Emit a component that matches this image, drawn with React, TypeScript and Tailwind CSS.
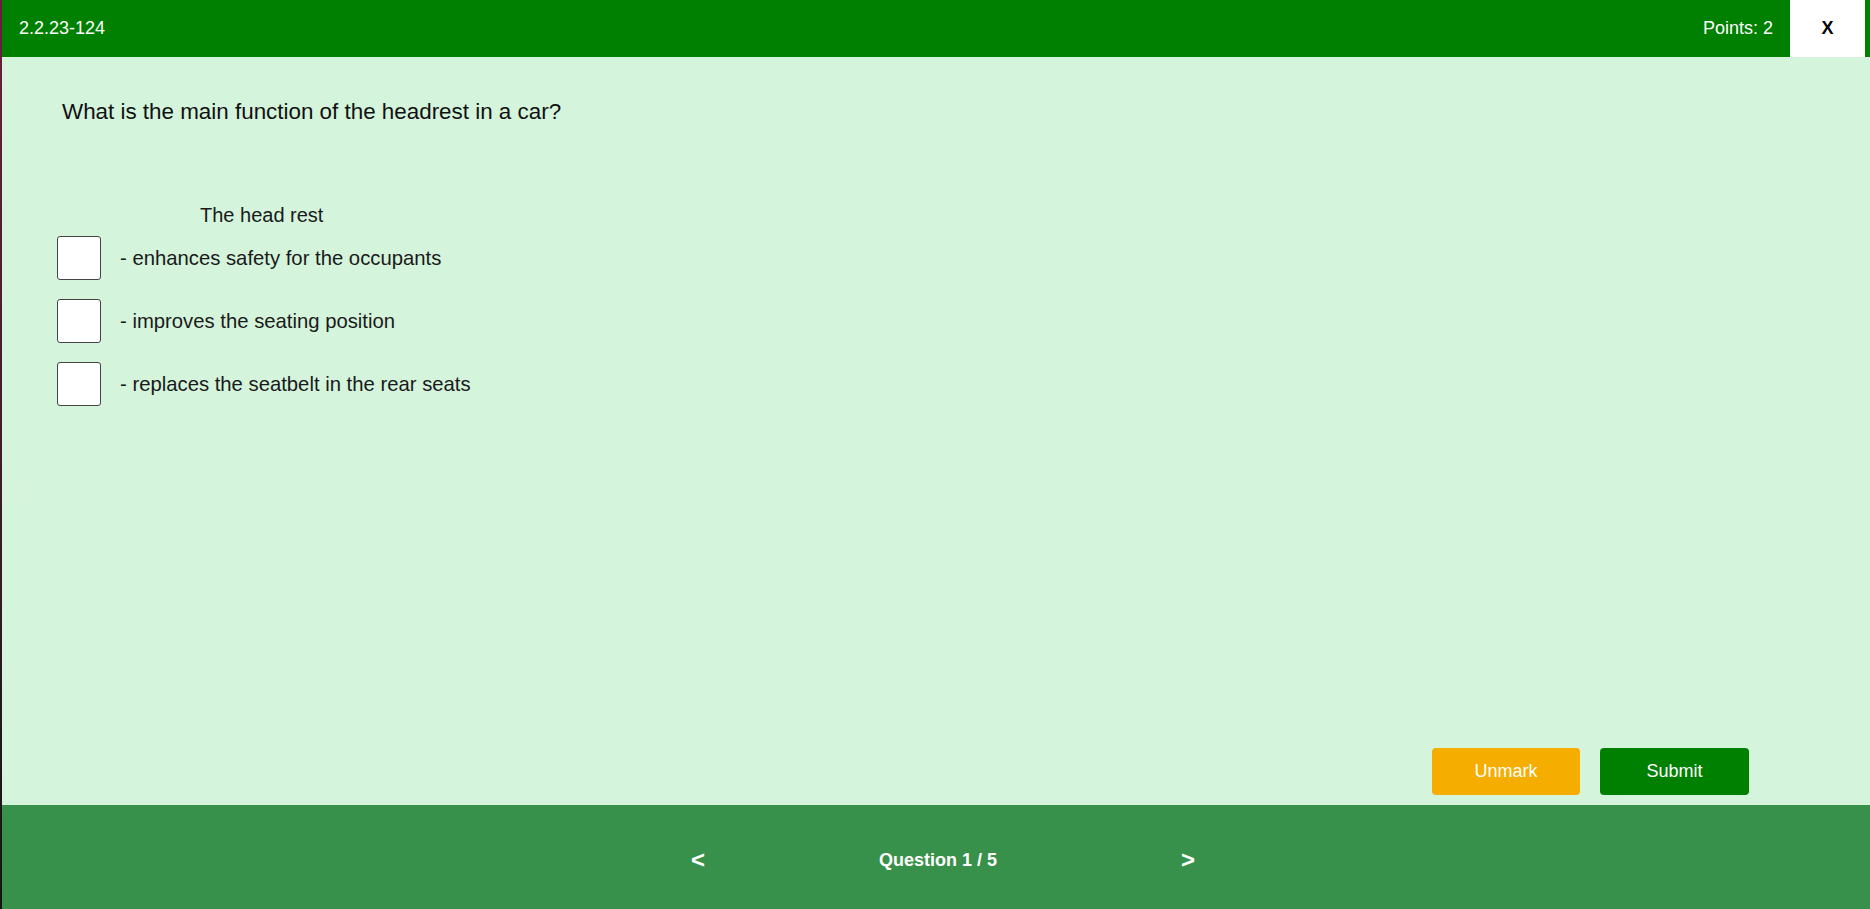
import { useState } from 'react'

const options = [
  '- enhances safety for the occupants',
  '- improves the seating position',
  '- replaces the seatbelt in the rear seats',
]

export default function App() {
  const [checked, setChecked] = useState<boolean[]>([false, false, false])

  const toggle = (i: number) => {
    setChecked((prev) => prev.map((v, idx) => (idx === i ? !v : v)))
  }

  return (
    <div className="flex h-screen w-full font-['Liberation_Sans',Arial,sans-serif]">
      {/* window edge */}
      <div className="w-[2px] shrink-0 bg-linear-to-b from-[#6b1f3f] to-[#141414]" />

      <div className="flex flex-1 flex-col">
        <header className="flex h-[57px] shrink-0 items-center bg-[#008000] pl-[17px] pr-[5px]">
          <span className="text-[18px] text-white">2.2.23-124</span>
          <div className="ml-auto flex h-full items-center">
            <span className="mr-[17px] text-[18px] text-white">Points: 2</span>
            <button className="h-full w-[75px] bg-white text-[18px] font-bold text-black">X</button>
          </div>
        </header>

        <main className="flex flex-1 flex-col bg-[#d4f4dc]">
          <h1 className="pl-[60px] pt-[42px] text-[22.4px] leading-[25px] text-[#111]">
            What is the main function of the headrest in a car?
          </h1>

          <div className="mt-[80px] pl-[55px]">
            <p className="pl-[143px] text-[20px] leading-[23px] text-[#1a1a1a]">The head rest</p>
            <div className="mt-[9px] flex flex-col gap-[19px]">
              {options.map((opt, i) => (
                <label key={i} className="flex cursor-pointer items-center gap-[19px]">
                  <span
                    onClick={() => toggle(i)}
                    className="flex h-[44px] w-[44px] items-center justify-center rounded-[3px] border-[1.5px] border-[#444] bg-white text-[24px]"
                  >
                    {checked[i] ? '✓' : ''}
                  </span>
                  <span className="text-[20.3px] leading-[23px] text-[#1a1a1a]">{opt}</span>
                </label>
              ))}
            </div>
          </div>

          <div className="mt-auto flex justify-end gap-[20px] pb-[10px] pr-[121px]">
            <button className="h-[47px] w-[148px] rounded-[4px] bg-[#f5ad00] text-[18px] text-white">Unmark</button>
            <button className="h-[47px] w-[149px] rounded-[4px] bg-[#008000] text-[18px] text-white">Submit</button>
          </div>
        </main>

        <footer className="flex h-[104px] shrink-0 items-center justify-center bg-[#38914a] pl-[14px] pt-[6px] font-bold text-white">
          <button className="text-[24px] leading-none">&lt;</button>
          <span className="ml-[174px] text-[18px]">Question 1 / 5</span>
          <button className="ml-[184px] text-[24px] leading-none">&gt;</button>
        </footer>
      </div>
    </div>
  )
}
